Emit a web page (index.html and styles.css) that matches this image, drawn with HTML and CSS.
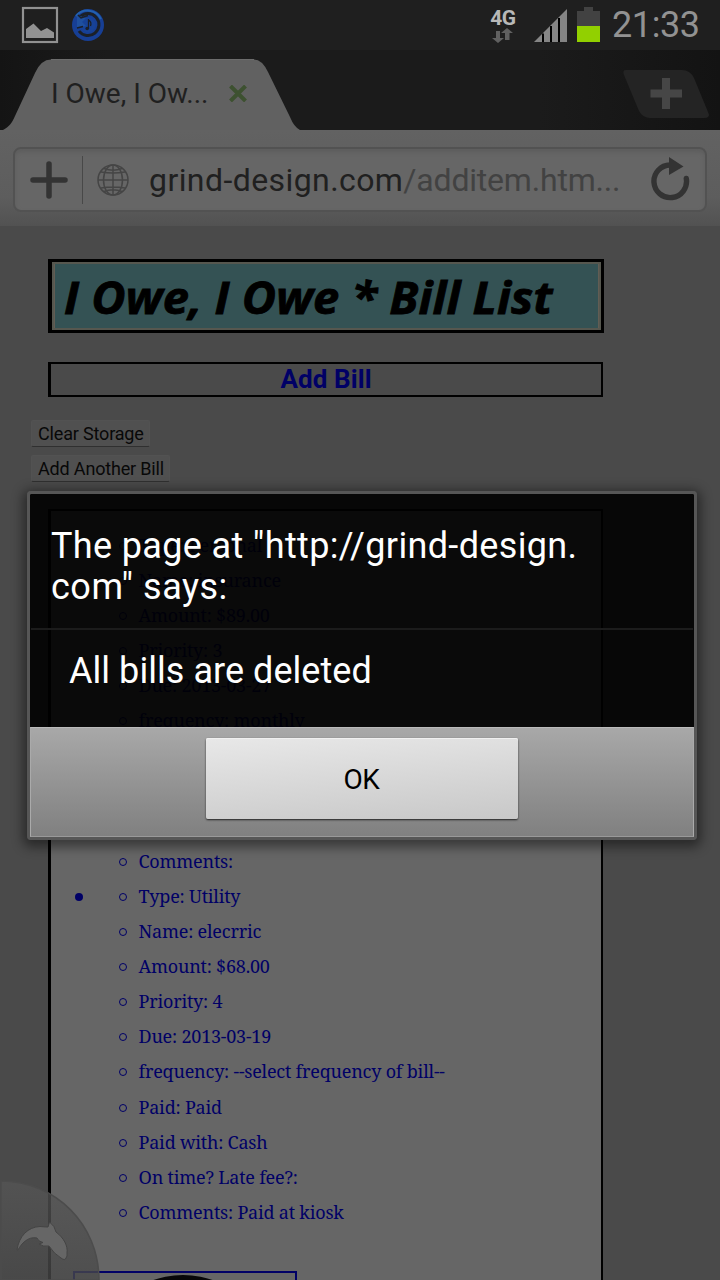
FILE: index.html
```html
<!DOCTYPE html>
<html lang="en">
<head>
<meta charset="utf-8">
<title>I Owe, I Owe</title>
<link rel="stylesheet" href="styles.css">
</head>
<body>
<div class="phone">
  <header class="status">
    <svg class="status-left" width="110" height="50" viewBox="0 0 110 50">
      <rect x="23" y="8" width="34" height="34" fill="none" stroke="#929292" stroke-width="2.2"/>
      <path d="M26 38V29L33.500 23.500L41 31L47 28L54 32.500V38Z" fill="#929292"/>
      <circle cx="88" cy="25" r="16" fill="#173f95"/>
      <path d="M79 31A11 11 0 1 0 80 17" fill="none" stroke="#1b2028" stroke-width="3"/>
      <path d="M76 16A15 15 0 0 1 101 19" fill="none" stroke="#2360ae" stroke-width="2"/>
      <circle cx="88" cy="25" r="7.500" fill="#174297"/>
      <path d="M77 15V28L86 26L82 22L86 18Z" fill="#1f509f"/>
      <path d="M78 15L81 18L88 15.500M77 28L83 26.500" stroke="#1b2028" stroke-width="1.500" fill="none"/>
      <path d="M88.500 19V29M88.500 20Q92 22 90.500 26" stroke="#1b2028" stroke-width="1.300" fill="none"/>
      <circle cx="87.200" cy="28.500" r="1.800" fill="#1b2028"/>
    </svg>
    <div class="status-right">
      <div class="network">
        <span class="net-label">4G</span>
        <svg width="22" height="17" viewBox="0 0 22 17"><path d="M4 4H8V11H12L6 16L0 11H4Z" fill="#606060"/><path d="M13 13H17.500V6H21L15 1L9 6H13Z" fill="#606060"/></svg>
      </div>
      <svg width="33" height="33" viewBox="0 0 33 33"><path d="M0 33L33 0V33Z" fill="#858585"/><path d="M8 24.500H10V33H8ZM16 17H18V33H16ZM24 9H26V33H24Z" fill="#000"/></svg>
      <svg class="battery" width="23" height="35" viewBox="0 0 23 35"><path d="M7 0H16V4H23V19H0V4H7Z" fill="#424242"/><path d="M0 19H23V35H0Z" fill="#92d000"/></svg>
      <span class="clock">21:33</span>
    </div>
  </header>

  <nav class="tabs">
    <svg class="tab-shape" width="720" height="80" viewBox="0 0 720 80">
      <path d="M3 80C9 77 12 73 15 66L35 23Q41 9.500 51 9.500H254Q262 9.500 268 22L290 67Q294 77 300 80Z" fill="#616161"/>
      <path d="M51 9.500H254" stroke="#6c6c6c" fill="none"/>
      <path d="M626 20H682Q690 20 694 28L708 62Q711 68 704 68H650Q643 68 639 61L624 25Q622 20 626 20Z" fill="#242424"/>
      <path d="M662 28H670V39.500H682V47.500H670V59H662V47.500H650.500V39.500H662Z" fill="#464646"/>
    </svg>
    <div class="tab-content">
      <span class="tab-title">I Owe, I Ow...</span>
      <svg width="18" height="17" viewBox="0 0 18 17"><path d="M1.500 1L16.500 16M16.500 1L1.500 16" stroke="#3d5130" stroke-width="4"/></svg>
    </div>
  </nav>

  <div class="toolbar">
    <div class="address">
      <svg class="add-icon" width="38" height="38" viewBox="0 0 38 38"><path d="M19 3V35M3 19H35" stroke="#333" stroke-width="5.500" stroke-linecap="round"/></svg>
      <span class="separator"></span>
      <svg class="globe" width="32" height="32" viewBox="0 0 32 32" fill="none" stroke="#454545" stroke-width="1.500"><circle cx="16" cy="16" r="15"/><ellipse cx="16" cy="16" rx="9.500" ry="15"/><path d="M16 1V31M1 16H31M4 8Q16 10 28 8M4 24Q16 22 28 24M7 4.500Q16 8 25 4.500M7 27.500Q16 24 25 27.500"/></svg>
      <span class="url">grind-design.com<span class="url-path">/additem.htm...</span></span>
      <svg class="reload" width="40" height="46" viewBox="0 0 40 46"><path d="M36.300 21.500A16.300 16.300 0 1 1 20 8" fill="none" stroke="#333" stroke-width="5.400" stroke-linecap="round"/><path d="M19 0L33.500 9.500L19 18Z" fill="#333"/></svg>
    </div>
  </div>

  <main class="page">
    <div class="banner"><h1 class="banner-text">I Owe, I Owe * Bill List</h1></div>
    <h2 class="heading"><span class="heading-text">Add Bill</span></h2>
    <div class="actions">
      <button class="action">Clear Storage</button>
      <button class="action action-wide">Add Another Bill</button>
    </div>
    <section class="bills">
      <ul class="bill">
        <li class="first-row">Type: Personal</li>
        <li>Name: insurance</li>
        <li>Amount: $89.00</li>
        <li>Priority: 3</li>
        <li>Due: 2013-03-27</li>
        <li>frequency: monthly</li>
        <li class="last-row">Comments:</li>
      </ul>
      <ul class="bill">
        <li class="first-row">Type: Utility</li>
        <li>Name: elecrric</li>
        <li>Amount: $68.00</li>
        <li>Priority: 4</li>
        <li>Due: 2013-03-19</li>
        <li>frequency: --select frequency of bill--</li>
        <li>Paid: Paid</li>
        <li>Paid with: Cash</li>
        <li>On time? Late fee?:</li>
        <li>Comments: Paid at kiosk</li>
      </ul>
      <div class="thumb"><span class="thumb-disc"></span></div>
    </section>
  </main>

  <svg class="dolphin" width="102" height="102" viewBox="0 0 102 102">
    <defs><linearGradient id="corner" x1="0" y1="0" x2="0" y2="1"><stop offset="0" stop-color="#555" stop-opacity=".78"/><stop offset="1" stop-color="#484848" stop-opacity=".78"/></linearGradient></defs>
    <path d="M1 3C56 3 99 47 99 102H1Z" fill="url(#corner)" stroke="#4c4c4c" stroke-width="1.500"/>
    <path d="M17 72C19 58 28 49 40 48.500Q45 49 48 49L49.500 44Q55 48 56 54C64 60 68 68 67 75L67 78L66 80Q65 83 61 80Q54 76 49 68Q43 69 39 66L43 64.500Q38 63.500 37 60C28 58 21 66 18 72Z" fill="#666" stroke="#444" stroke-width="1"/>
  </svg>

  <div class="dialog" role="alertdialog">
    <div class="dialog-title"><span class="title-one">The page at "http://grind-design.</span><span class="title-two">com" says:</span></div>
    <div class="dialog-body"><span class="message">All bills are deleted</span></div>
    <div class="dialog-foot"><button class="ok">OK</button></div>
  </div>
</div>
</body>
</html>
```
FILE: styles.css
```css
*, *::before, *::after { box-sizing: border-box; }
body { margin: 0; background: #4a4a4a; font-family: Roboto, sans-serif; }
svg { display: block; flex: none; }
span { white-space: nowrap; }
.phone { position: relative; width: 720px; height: 1280px; overflow: hidden; background: #4a4a4a; display: flex; flex-direction: column; }

.status { height: 50px; flex: none; background: #1f1f1f; display: flex; justify-content: space-between; }
.status-right { display: flex; align-items: flex-start; padding: 7px 20px 0 0; }
.status-right > svg { margin-top: 2px; margin-left: 18px; }
.status-right > .battery { margin: 0 0 0 10px; }
.network { width: 26px; display: flex; flex-direction: column; align-items: center; }
.net-label { padding-top: 1px; font-size: 21px; line-height: 20px; font-weight: 700; color: #b8b8b8; letter-spacing: -0.4px; }
.network svg { margin-top: -1px; }
.clock { width: 88px; margin-left: 12px; font-size: 36px; line-height: 36px; color: #929292; letter-spacing: -0.4px; }

.tabs { height: 80px; flex: none; position: relative; background: linear-gradient(90deg, #141414, #1b1b1b 15%, #1b1b1b 75%, #131313); }
.tab-shape { position: absolute; left: 0; top: 0; }
.tab-content { position: relative; display: flex; align-items: center; height: 80px; padding: 6px 0 0 51px; }
.tab-title { width: 178px; font-size: 28px; color: #202020; }

.toolbar { height: 96px; flex: none; padding: 17px 13px 14px; background: linear-gradient(#626262, #5d5d5d 70%, #525252); }
.address { height: 65px; display: flex; align-items: center; padding-left: 15px; border: 2px solid #525252; border-radius: 8px; background: #666; box-shadow: inset 0 3px 4px #5d5d5d; }
.separator { width: 1px; height: 48px; margin: 0 14px; background: #484848; }
.url { width: 500px; margin-left: 20px; font-size: 32px; color: #202020; letter-spacing: 0.42px; }
.url-path { color: #424242; letter-spacing: -0.2px; }
.reload { margin-left: 1px; }

.page { flex: 1; display: flex; flex-direction: column; align-items: flex-start; padding: 33px 0 0 31px; min-height: 0; }
.banner { flex: none; width: 556px; height: 74px; margin-left: 17px; border: 3px solid #000; border-left-width: 4px; background: #345254; box-shadow: inset 0 0 0 2px #56574f, inset 3px 0 #615d54, inset -3px 0 #615d54; padding-left: 12px; }
.banner-text { margin: 0; padding-top: 1px; font: italic 700 45px/67px "Open Sans", sans-serif; color: #000; white-space: nowrap; -webkit-text-stroke: 0.8px #000; transform: scaleX(1.045); transform-origin: 0 0; }
.heading { flex: none; width: 555px; height: 35px; margin: 29px 0 0 17px; border: 2px solid #000; border-left-width: 3px; text-align: center; font-size: 26px; line-height: 31px; color: #000066; letter-spacing: 0.1px; }
.actions { flex: none; display: flex; flex-direction: column; align-items: flex-start; gap: 8px; margin-top: 23px; }
.action { width: 119px; height: 27px; border: 1px solid #525252; border-bottom: 1px solid #303030; background: #505050; padding: 0 0 0 6px; border-radius: 2px; font: 18px/24px Roboto, sans-serif; letter-spacing: -0.17px; color: #080808; text-align: left; white-space: nowrap; }
.action-wide { width: 139px; }

.bills { flex: none; width: 555px; height: 790px; margin: 27px 0 0 17px; border: 2px solid #000; border-left-width: 3px; background: #666; padding: 17px 0 0 22px; color: #000066; }
.bill { position: relative; margin: 0; padding: 0 0 0 66px; list-style: none; font: 18px/35.1px "Noto Serif", "Droid Serif", "DejaVu Serif Condensed", serif; letter-spacing: -0.21px; }
.bill li { position: relative; left: -0.5px; height: 35.1px; white-space: nowrap; }
.bill li::before { content: ""; position: absolute; left: -20px; top: 14px; width: 8px; height: 8px; border: 1.5px solid #000066; border-radius: 50%; }
.bill .first-row::after { content: ""; position: absolute; left: -64px; top: 14px; width: 8px; height: 8px; border-radius: 50%; background: #000066; }
.bill .last-row { margin-top: 105.3px; }
.thumb { position: relative; width: 224px; height: 80px; margin-top: 41px; border: 2px solid #000066; overflow: hidden; }
.thumb-disc { position: absolute; left: 18px; top: 2px; width: 180px; height: 180px; border-radius: 50%; background: #080808; }

.dolphin { position: absolute; left: 0; top: 1178px; }

.dialog { position: absolute; left: 27px; top: 491px; width: 670px; height: 349px; border: 3px solid #565656; border-radius: 4px; background: rgba(0,0,0,.9) padding-box; box-shadow: 0 3px 12px 4px rgba(0,0,0,.45); display: flex; flex-direction: column; color: #fff; font-size: 36px; }
.dialog-title { height: 136px; margin: 0 1px; padding: 32px 0 0 20px; border-bottom: 2px solid #1c1c1c; line-height: 41px; display: flex; flex-direction: column; align-items: flex-start; }
.title-one { letter-spacing: 0.35px; }
.title-two { letter-spacing: 0.5px; }
.dialog-body { flex: 1; padding: 20px 0 0 39px; line-height: 42px; }
.message { letter-spacing: 0.05px; }
.dialog-foot { height: 110px; display: flex; justify-content: center; padding: 11px 0 0; border: 1px solid #aaa; border-top-color: #bbb; border-bottom-color: #999; background: linear-gradient(#a8a8a8, #808080); }
.ok { width: 312px; height: 81px; margin-right: 1px; margin-top: -1px; padding: 2px 0 0; border: 0; border-radius: 2px; background: linear-gradient(175deg, #e8e8e8, #c8c8c8); box-shadow: 0 1px 2px #222, inset 0 1px #f0f0f0; color: #000; font: 28px Roboto, sans-serif; letter-spacing: -0.3px; }
```
